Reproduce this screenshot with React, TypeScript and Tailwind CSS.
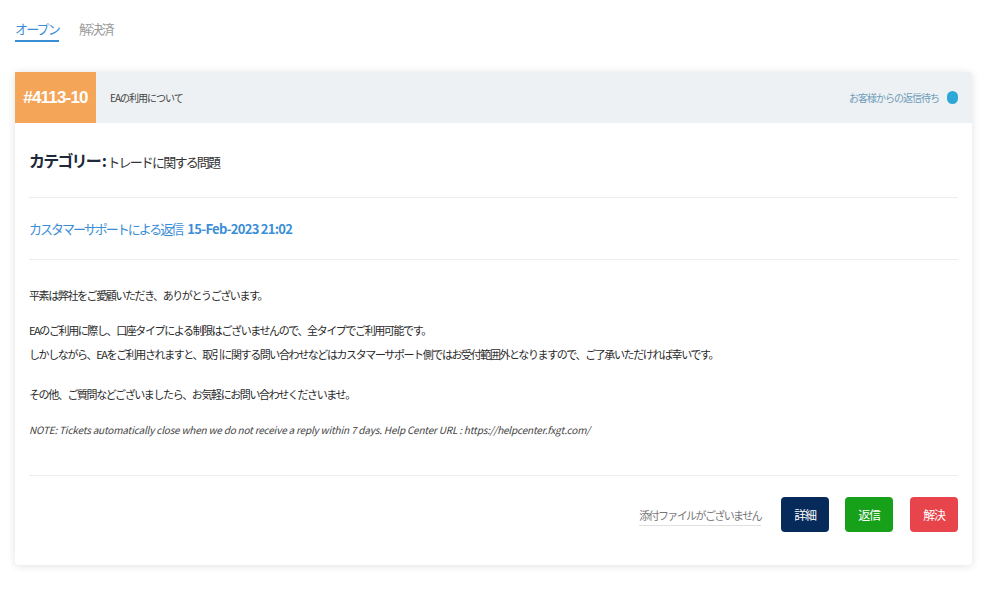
import React from 'react';

const jp = { fontFamily: '"Noto Sans CJK JP", "Noto Sans", sans-serif' };

export default function App() {
  return (
    <div className="w-[1000px] h-[600px] bg-white overflow-hidden" style={jp}>
      {/* tabs */}
      <div className="flex gap-[20px] pl-[15px] pt-[19px]">
        <div className="text-[13px] leading-[20px] text-[#3a8ed6] tracking-[-1.8px] pb-[1px] border-b-2 border-[#3a8ed6]">
          オープン
        </div>
        <div className="text-[13px] leading-[20px] text-[#9a9a9a] tracking-[-1.8px]">解決済</div>
      </div>

      {/* ticket card */}
      <div className="mx-[15px] mt-[30px] w-[957px] bg-white rounded-sm shadow-[0_1px_8px_rgba(0,0,0,0.12)]">
        <div className="flex h-[51px] items-stretch bg-[#edf1f3] rounded-t-sm">
          <div className="w-[81px] bg-[#f4a557] flex items-center justify-center text-white font-bold text-[17px] tracking-[-0.8px]" style={{ fontFamily: '"Liberation Sans", sans-serif' }}>
            #4113-10
          </div>
          <div className="pl-[14px] flex items-center text-[10px] text-[#444] tracking-[-1px]">EAの利用について</div>
          <div className="ml-auto flex items-center gap-[8px] pr-[14px]">
            <span className="text-[10px] text-[#6d9cba] tracking-[-1px]">お客様からの返信待ち</span>
            <span className="w-[11px] h-[13px] rounded-full bg-[#2ca8d8]" />
          </div>
        </div>

        <div className="px-[14px]">
          <div className="flex items-baseline h-[75px] pt-[25px] border-b border-[#ebeef0]">
            <span className="text-[16px] font-bold text-[#1e2a3a] tracking-[-1.8px]">カテゴリー :</span>
            <span className="ml-[2px] text-[13px] text-[#333] tracking-[-1.8px]">トレードに関する問題</span>
          </div>

          <div className="h-[62px] flex items-center border-b border-[#ebeef0] text-[13px] text-[#3a8ed6] tracking-[-2px]">
            カスタマーサポートによる返信
            <span className="ml-[5px] font-bold tracking-[-0.7px]">15-Feb-2023 21:02</span>
          </div>

          <div className="pt-[23px] pb-[33px] border-b border-[#ebeef0] text-[11px] leading-[24px] text-[#2a2a2a] tracking-[-1.4px]">
            <p>平素は弊社をご愛顧いただき、ありがとうございます。</p>
            <p className="mt-[11px]">EAのご利用に際し、口座タイプによる制限はございませんので、全タイプでご利用可能です。</p>
            <p>しかしながら、EAをご利用されますと、取引に関する問い合わせなどはカスタマーサポート側ではお受付範囲外となりますので、ご了承いただければ幸いです。</p>
            <p className="mt-[16px]">その他、ご質問などございましたら、お気軽にお問い合わせくださいませ。</p>
            <p className="mt-[12px] italic text-[10px] text-[#444] tracking-[-0.2px]">
              NOTE: Tickets automatically close when we do not receive a reply within 7 days. Help Center URL : https://helpcenter.fxgt.com/
            </p>
          </div>

          <div className="h-[89px] flex items-center justify-end pb-[12px]">
            <span className="mr-[20px] mt-[4px] text-[11px] text-[#777] tracking-[-1.6px] border-b border-[#e0e0e0] pb-[1px]">
              添付ファイルがございません
            </span>
            <button className="w-[48px] h-[35px] rounded-[4px] bg-[#062a5a] text-white text-[12px] tracking-[-1.2px]">詳細</button>
            <button className="ml-[16px] w-[48px] h-[35px] rounded-[4px] bg-[#17a019] text-white text-[12px] tracking-[-1.2px]">返信</button>
            <button className="ml-[17px] w-[48px] h-[35px] rounded-[4px] bg-[#e8444c] text-white text-[12px] tracking-[-1.2px]">解決</button>
          </div>
        </div>
      </div>
    </div>
  );
}
